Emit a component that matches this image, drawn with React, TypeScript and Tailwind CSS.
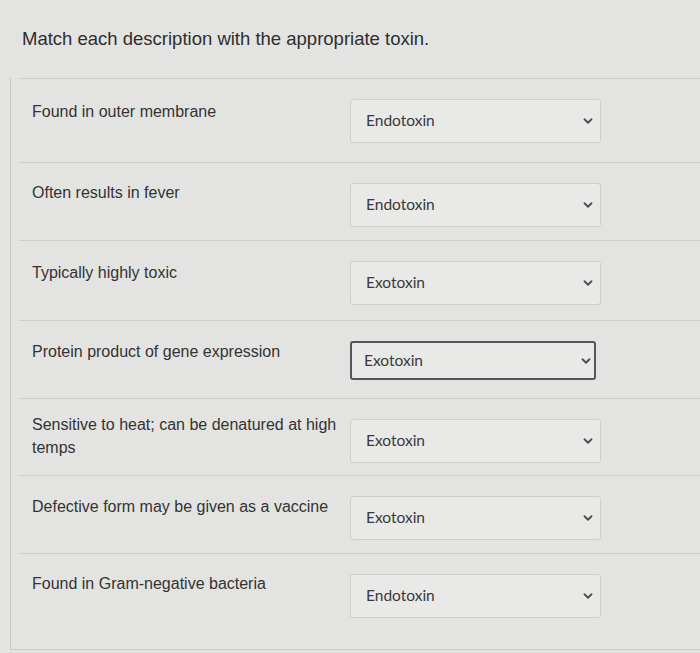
import { ChevronDown } from 'lucide-react'

interface MatchRow {
  label: string
  value: string
  height: string
  labelPad: string
  focused?: boolean
}

const rows: MatchRow[] = [
  { label: 'Found in outer membrane', value: 'Endotoxin', height: 'h-[84px]', labelPad: 'pt-[21px]' },
  { label: 'Often results in fever', value: 'Endotoxin', height: 'h-[78px]', labelPad: 'pt-[18px]' },
  { label: 'Typically highly toxic', value: 'Exotoxin', height: 'h-[80px]', labelPad: 'pt-[20px]' },
  { label: 'Protein product of gene expression', value: 'Exotoxin', height: 'h-[78px]', labelPad: 'pt-[19px]', focused: true },
  { label: 'Sensitive to heat; can be denatured at high temps', value: 'Exotoxin', height: 'h-[77px]', labelPad: 'pt-[14px]' },
  { label: 'Defective form may be given as a vaccine', value: 'Exotoxin', height: 'h-[78px]', labelPad: 'pt-[19px]' },
  { label: 'Found in Gram-negative bacteria', value: 'Endotoxin', height: 'h-[96px]', labelPad: 'pt-[18px]' },
]

function Select({ value, focused }: { value: string; focused?: boolean }) {
  return (
    <div
      className={
        focused
          ? 'flex h-[39px] w-[246px] items-center justify-between rounded-[3px] border-2 border-[#555] bg-[#e9e9e7] pl-[12px] pr-[1px]'
          : 'flex h-[44px] w-[251px] items-center justify-between rounded-[3px] border border-[#cfcfcd] bg-[#e9e9e7] pl-[15px] pr-[5px]'
      }
    >
      <span className="font-['Lato',sans-serif] text-[15.5px] text-[#3a3a3a]">{value}</span>
      <ChevronDown className="h-[14px] w-[14px] text-[#505050]" strokeWidth={3.2} />
    </div>
  )
}

export default function App() {
  return (
    <div className="min-h-[653px] w-[700px] bg-[#e3e3e1] font-['Liberation_Sans',Arial,sans-serif] text-[#333]">
      <div className="h-[78px] pl-[22px] pt-[25px] text-[18.5px] text-[#2e2e2e]">
        Match each description with the appropriate toxin.
      </div>
      <div className="ml-[10px] border-b border-l border-[#c8c8c6]">
        {rows.map((r, i) => (
          <div
            key={i}
            className={`ml-[8px] flex items-start border-t border-[#cdcdcb] ${r.height}`}
          >
            <div className={`w-[331px] pl-[13px] pr-[10px] text-[16px] leading-[23px] text-[#333] ${r.labelPad}`}>
              {r.label}
            </div>
            <div className={r.focused ? 'pt-[20px]' : 'pt-[20px]'}>
              <Select value={r.value} focused={r.focused} />
            </div>
          </div>
        ))}
      </div>
    </div>
  )
}
